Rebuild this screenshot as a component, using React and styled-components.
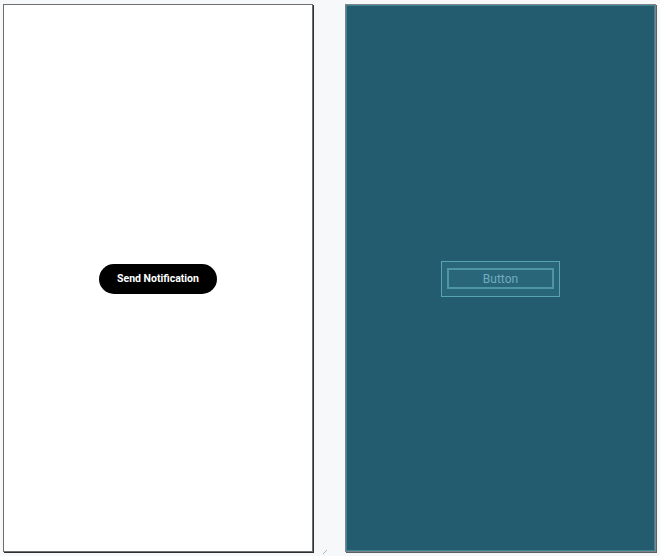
import React from "react";
import styled, { createGlobalStyle } from "styled-components";

const Global = createGlobalStyle`
  html, body { margin: 0; padding: 0; background: #f7f8fa; }
  body { font-family: Roboto, "Liberation Sans", sans-serif; }
`;

const Canvas = styled.div`
  position: relative;
  width: 660px;
  height: 556px;
  box-sizing: border-box;
  padding: 4px 0 0 3px;
  display: flex;
  gap: 32px;
  align-items: flex-start;
`;

const DesignPanel = styled.div`
  width: 310px;
  height: 548px;
  box-sizing: border-box;
  background: #ffffff;
  border: 1px solid #6e6e6e;
  box-shadow: 1px 1px 0 #2e2e2e;
  display: flex;
  align-items: center;
  justify-content: center;
`;

const BlueprintPanel = styled.div`
  width: 311px;
  height: 548px;
  box-sizing: border-box;
  background: #235c6e;
  border: 1px solid #7d8588;
  box-shadow: inset 0 0 0 1px #3f8294, 1px 1px 0 #5a5f62;
  display: flex;
  align-items: center;
  justify-content: center;
`;

const PillButton = styled.button`
  width: 118px;
  height: 30px;
  border: none;
  border-radius: 15px;
  background: #000;
  color: #fff;
  font-family: Roboto, "Liberation Sans", sans-serif;
  font-weight: 700;
  font-size: 10.5px;
  padding: 0;
  margin-top: 1px;
`;

const BlueprintOuter = styled.div`
  width: 119px;
  height: 36px;
  box-sizing: border-box;
  border: 1px solid #5aa3b3;
  background: #2a6679;
  display: flex;
  align-items: center;
  justify-content: center;
  margin-top: 1px;
`;

const BlueprintInner = styled.div`
  width: 107px;
  height: 21px;
  box-sizing: border-box;
  border: 2px solid #4e95a6;
  display: flex;
  align-items: center;
  justify-content: center;
  color: #6fadbd;
  font-family: Roboto, "Liberation Sans", sans-serif;
  font-size: 12px;
`;

const ResizeMark = styled.svg`
  position: absolute;
  left: 322px;
  top: 549px;
`;

export default function App() {
  return (
    <>
      <Global />
      <Canvas>
        <DesignPanel>
          <PillButton>Send Notification</PillButton>
        </DesignPanel>
        <BlueprintPanel>
          <BlueprintOuter>
            <BlueprintInner>Button</BlueprintInner>
          </BlueprintOuter>
        </BlueprintPanel>
        <ResizeMark width="6" height="6" viewBox="0 0 6 6">
          <path d="M1 5 L5 1" stroke="#b0b4b8" strokeWidth="1" />
        </ResizeMark>
      </Canvas>
    </>
  );
}
